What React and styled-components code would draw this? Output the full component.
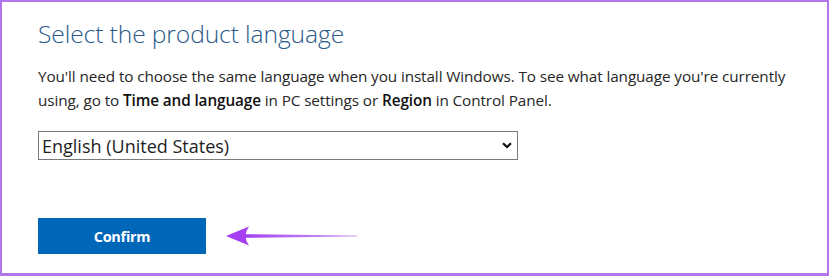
import React from "react";
import styled, { createGlobalStyle } from "styled-components";

const Global = createGlobalStyle`
  html, body { margin: 0; padding: 0; background: #fff; }
  body { width: 830px; height: 276px; overflow: hidden; }
`;

const Frame = styled.div`
  box-sizing: border-box;
  width: 829px;
  height: 276px;
  border: 2px solid #b374ec;
  border-bottom-width: 3px;
  background: #fff;
  padding: 16px 0 0 36px;
  font-family: "Open Sans", "Noto Sans", sans-serif;
  color: #1e1e1e;
`;

const Title = styled.h1`
  margin: 0;
  font-weight: 300;
  font-size: 24.6px;
  line-height: 32px;
  color: #2a5a8a;
  letter-spacing: -0.1px;
`;

const Intro = styled.p`
  margin: 14px 0 0;
  width: 770px;
  font-size: 15.3px;
  line-height: 24px;
  letter-spacing: -0.1px;
  color: #262626;

  b { font-weight: 600; color: #111; }
`;

const Dropdown = styled.div`
  position: relative;
  margin-top: 19px;
  width: 480px;
  height: 29px;
`;

const Select = styled.select`
  box-sizing: border-box;
  appearance: none;
  width: 100%;
  height: 100%;
  margin: 0;
  padding: 0 30px 0 3px;
  border: 1px solid #7a7a7a;
  border-radius: 0;
  background: #fff;
  font-family: inherit;
  font-size: 18px;
  color: #1e1e1e;
  outline: none;
`;

const Chevron = styled.svg`
  position: absolute;
  right: 6px;
  top: 11px;
  pointer-events: none;
`;

const ActionRow = styled.div`
  display: flex;
  align-items: center;
  gap: 19px;
  margin-top: 58px;
`;

const Button = styled.button`
  width: 168px;
  height: 36px;
  border: none;
  border-radius: 0;
  background: #0067b8;
  color: #fff;
  font-family: inherit;
  font-weight: 700;
  font-size: 14.5px;
  letter-spacing: -0.3px;
  cursor: pointer;
`;

function Arrow() {
  return (
    <svg width="135" height="22" viewBox="0 0 135 22">
      <defs>
        <linearGradient id="shaft" x1="0" y1="0" x2="1" y2="0">
          <stop offset="0" stopColor="#a23ef0" />
          <stop offset="1" stopColor="#c48af0" stopOpacity="0.8" />
        </linearGradient>
      </defs>
      <path d="M18 9.2 L132 10.4 L132 11.6 L18 12.8 Z" fill="url(#shaft)" />
      <path d="M1 11 L24 1.5 Q17 11 24 20.5 Z" fill="#a63ef2" />
    </svg>
  );
}

export default function App() {
  return (
    <>
      <Global />
      <Frame>
        <Title>Select the product language</Title>
        <Intro>
          You'll need to choose the same language when you install Windows. To
          see what language you're currently using, go to <b>Time and language</b>{" "}
          in PC settings or <b>Region</b> in Control Panel.
        </Intro>
        <Dropdown>
          <Select defaultValue="en-us">
            <option value="en-us">English (United States)</option>
          </Select>
          <Chevron width="10" height="7" viewBox="0 0 10 7">
            <path d="M1 1.2 L5 5 L9 1.2" fill="none" stroke="#111" strokeWidth="2.2" />
          </Chevron>
        </Dropdown>
        <ActionRow>
          <Button>Confirm</Button>
          <Arrow />
        </ActionRow>
      </Frame>
    </>
  );
}
